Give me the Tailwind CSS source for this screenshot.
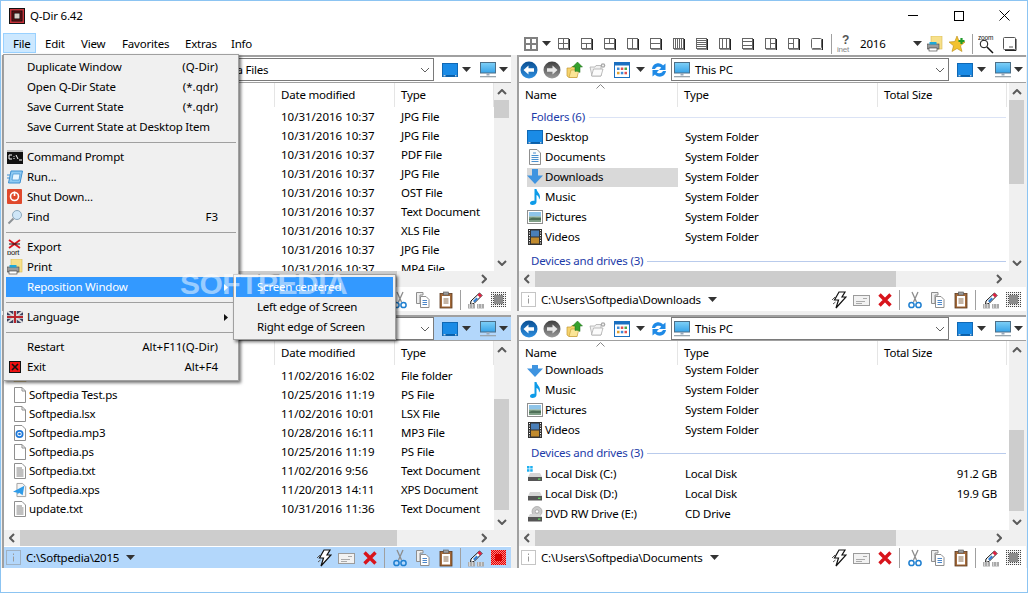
<!DOCTYPE html>
<html lang="en">
<head>
<meta charset="utf-8"/>
<title>Q-Dir 6.42</title>
<script src="https://cdn.jsdelivr.net/npm/@tailwindcss/browser@4"></script>
</head>
<body class="bg-white">

<!-- shared icons -->
<svg width="0" height="0" class="absolute">
  <defs>
    <linearGradient id="gBlue" x1="0" y1="0" x2="0" y2="1"><stop offset="0" stop-color="#0a4f93"/><stop offset="1" stop-color="#2f8fe0"/></linearGradient>
    <linearGradient id="gGrey" x1="0" y1="0" x2="0" y2="1"><stop offset="0" stop-color="#3e3e3e"/><stop offset="1" stop-color="#9a9a9a"/></linearGradient>
    <linearGradient id="gSky" x1="0" y1="0" x2="0" y2="1"><stop offset="0" stop-color="#7fd0f7"/><stop offset="1" stop-color="#37a3e8"/></linearGradient>
    <pattern id="pDots" width="2" height="2" patternUnits="userSpaceOnUse"><rect width="2" height="2" fill="#f2f2f2"/><rect width="1" height="1" fill="#444"/></pattern>
    <pattern id="pRed" width="2" height="2" patternUnits="userSpaceOnUse"><rect width="2" height="2" fill="#ff8080"/><rect width="1" height="1" fill="#e00000"/><rect x="1" y="1" width="1" height="1" fill="#e00000"/></pattern>
  </defs>

  <symbol id="back" viewBox="0 0 18 18"><circle cx="9" cy="9" r="8.5" fill="url(#gBlue)"/><path d="M3.5 9 8.5 4.5V7.2H14V10.8H8.5V13.5Z" fill="#fff"/></symbol>
  <symbol id="forward" viewBox="0 0 18 18"><circle cx="9" cy="9" r="8.5" fill="url(#gGrey)"/><path d="M14.5 9 9.5 4.5V7.2H4V10.8H9.5V13.5Z" fill="#e8e8e8"/></symbol>
  <symbol id="up" viewBox="0 0 18 18"><path d="M1 7H5L6 5.500H11V16.500H3L1 15Z" fill="#f6d36c" stroke="#c39a35" stroke-width=".7"/><path d="M3 16.500 5 9H13L11 16.500Z" fill="#fbe596" stroke="#c39a35" stroke-width=".6"/><path d="M11.500 1 16.500 6H14V11.500C12.500 10.500 10.500 10 9 10.500V6H6.500Z" fill="#35a02c" stroke="#1d6e18" stroke-width=".5"/></symbol>
  <symbol id="foldgear" viewBox="0 0 18 18"><path d="M1 6H6L7 4.500H12V15H3Z" fill="#f1f1f1" stroke="#adadad" stroke-width=".8"/><path d="M2.500 15 4.500 8H14L12 15Z" fill="#fbfbfb" stroke="#adadad" stroke-width=".8"/><circle cx="14" cy="4.500" r="2.300" fill="#a8a8a8"/><circle cx="14" cy="4.500" r=".9" fill="#fff"/></symbol>
  <symbol id="view" viewBox="0 0 16 16"><rect x=".5" y=".5" width="15" height="15" fill="#fff" stroke="#1a6fc0"/><rect x="1" y="1" width="14" height="2.500" fill="#1a6fc0"/><rect x="3" y="5.500" width="2.500" height="2.500" fill="#3c8ad8"/><rect x="6.800" y="5.500" width="2.500" height="2.500" fill="#e05050"/><rect x="10.500" y="5.500" width="2.500" height="2.500" fill="#4aa84a"/><rect x="3" y="9.800" width="2.500" height="2.500" fill="#e0a030"/><rect x="6.800" y="9.800" width="2.500" height="2.500" fill="#3c8ad8"/><rect x="10.500" y="9.800" width="2.500" height="2.500" fill="#e05050"/></symbol>
  <symbol id="refresh" viewBox="0 0 18 18"><path d="M2 8C2.500 4 6 1.800 9.500 2.500 11 2.800 12.300 3.500 13 4.500L15.500 2.500V9H9L11.200 6.800C10 5.500 6.500 5 5 8Z" fill="#1f8ae6"/><path d="M16 10C15.500 14 12 16.200 8.500 15.500 7 15.200 5.700 14.500 5 13.500L2.500 15.500V9H9L6.800 11.200C8 12.500 11.500 13 13 10Z" fill="#1f8ae6"/></symbol>
  <symbol id="desktop" viewBox="0 0 16 14"><rect x=".5" y=".5" width="15" height="13" fill="#1a8be6" stroke="#1068b4"/><rect x="1" y="12" width="14" height="1.500" fill="#0a5fa8"/><rect x="1.500" y="12.300" width="2" height="1" fill="#fff"/><rect x="13" y="12.300" width="1.500" height="1" fill="#fff"/></symbol>
  <symbol id="monitor" viewBox="0 0 16 16"><rect x=".5" y=".5" width="15" height="10.500" fill="url(#gSky)" stroke="#4c6f88"/><rect x="6.500" y="11" width="3" height="2.500" fill="#9ab"/><rect x="0" y="14" width="16" height="1.300" fill="#9aa5ad"/></symbol>
  <symbol id="caret" viewBox="0 0 9 5"><path d="M0 0H9L4.500 5Z" fill="#333"/></symbol>

  <symbol id="bolt" viewBox="0 0 16 18"><path d="M8 1H14L11 6H15L5 17 7.500 9H3.500Z" fill="#fff" stroke="#111" stroke-width="1.200"/><path d="M1 9 4 6M2 13 4.500 11" stroke="#555" fill="none"/></symbol>
  <symbol id="mail" viewBox="0 0 18 14"><rect x=".5" y="2.500" width="16" height="10" fill="#f2f2f2" stroke="#9b9b9b"/><path d="M10 5.500H14M3 8.500H12M3 10.500H9" stroke="#aaa"/></symbol>
  <symbol id="redx" viewBox="0 0 16 16"><path d="M2.500 2.500 13.500 13.500M13.500 2.500 2.500 13.500" stroke="#d8141c" stroke-width="3.400"/></symbol>
  <symbol id="scissors" viewBox="0 0 14 18"><path d="M4 1 8.500 11M10 1 5.500 11" stroke="#8d8d8d" stroke-width="1.300"/><circle cx="3.500" cy="14" r="2.600" fill="none" stroke="#1f7fd0" stroke-width="1.500"/><circle cx="10.500" cy="14" r="2.600" fill="none" stroke="#1f7fd0" stroke-width="1.500"/></symbol>
  <symbol id="copy" viewBox="0 0 16 18"><path d="M1.500 1.500H8V4H5V12.500H1.500Z" fill="#eee" stroke="#8e8e8e"/><path d="M5.500 5.500H11L14 8.500V16.500H5.500Z" fill="#fff" stroke="#8e8e8e"/><path d="M7.500 9.500H12M7.500 11.500H12M7.500 13.500H12" stroke="#4b86c9"/></symbol>
  <symbol id="paste" viewBox="0 0 14 18"><rect x="1" y="2.500" width="12" height="14.500" fill="#a2693a" stroke="#5d3a1e" stroke-width=".8"/><rect x="3" y="5" width="8" height="10.500" fill="#fff"/><rect x="4.500" y="1" width="5" height="3" fill="#9c9c9c" stroke="#555" stroke-width=".6"/><path d="M4.500 8H9.500M4.500 10H9.500M4.500 12H9.500" stroke="#8a6a4a"/></symbol>
  <symbol id="pen" viewBox="0 0 18 18"><path d="M4 10 12.500 2 15 4.500 7 12.500 3.500 13.500Z" fill="#fff" stroke="#111"/><path d="M10.500 4 12.500 2 15 4.500 13 6.500Z" fill="#e02040"/><path d="M6 10 9.500 6.500 11 8 7.500 11.500Z" fill="#2f7fd6"/><rect x="1" y="13" width="7" height="4.500" fill="#aaa"/><rect x="10" y="13" width="7" height="4.500" fill="#aaa"/><path d="M2 14H3M5 14H6M2 16H3M5 16H6M11 14H12M14 14H15M11 16H12M14 16H15" stroke="#fff"/></symbol>
  <symbol id="dots" viewBox="0 0 15 15"><rect width="15" height="15" fill="url(#pDots)"/><rect x="3" y="3" width="9" height="9" fill="#8b8b8b"/></symbol>
  <symbol id="dotsred" viewBox="0 0 15 15"><rect width="15" height="15" fill="url(#pRed)"/><rect x="4" y="4" width="7" height="7" fill="#d80000"/></symbol>
  <symbol id="info" viewBox="0 0 15 15"><rect x=".5" y=".5" width="14" height="14" fill="none" stroke="#8a8a8a" stroke-dasharray="1 1"/><path d="M7.500 3.500V5M7.500 6.500V11.500" stroke="#9a9a9a"/></symbol>
  <symbol id="chevup" viewBox="0 0 10 6"><path d="M1 5 5 1 9 5" fill="none" stroke="#5a5a5a" stroke-width="2"/></symbol>
  <symbol id="chevdown" viewBox="0 0 10 6"><path d="M1 1 5 5 9 1" fill="none" stroke="#5a5a5a" stroke-width="2"/></symbol>
  <symbol id="chevleft" viewBox="0 0 6 10"><path d="M5 1 1 5 5 9" fill="none" stroke="#5a5a5a" stroke-width="2"/></symbol>
  <symbol id="chevright" viewBox="0 0 6 10"><path d="M1 1 5 5 1 9" fill="none" stroke="#5a5a5a" stroke-width="2"/></symbol>

  <symbol id="file" viewBox="0 0 14 16"><path d="M1.500 .5H9L12.500 4V15.500H1.500Z" fill="#fff" stroke="#8f8f8f"/><path d="M9 .5V4H12.500" fill="none" stroke="#8f8f8f"/></symbol>
  <symbol id="txt" viewBox="0 0 14 16"><path d="M1.500 .5H9L12.500 4V15.500H1.500Z" fill="#fff" stroke="#8f8f8f"/><path d="M3.500 5H9M3.500 7H10.500M3.500 9H10.500M3.500 11H10.500M3.500 13H10.500" stroke="#808080"/></symbol>
  <symbol id="mp3" viewBox="0 0 14 16"><path d="M1.500 .5H9L12.500 4V15.500H1.500Z" fill="#fff" stroke="#8f8f8f"/><circle cx="6.500" cy="9" r="4" fill="#1f78d8"/><circle cx="6.500" cy="9" r="2.300" fill="#fff"/><circle cx="6.500" cy="9" r="1.300" fill="#1f78d8"/></symbol>
  <symbol id="xps" viewBox="0 0 16 16"><path d="M4.500 .5H11L14.500 4V15.500H4.500Z" fill="#f5f5f5" stroke="#9a9a9a"/><path d="M0 10 13 3 11 14 7 11 5 13 5 11Z" fill="#2f9be8"/></symbol>
  <symbol id="folder" viewBox="0 0 16 14"><path d="M1 1H6L7.500 3H15V13H1Z" fill="#e9c46f" stroke="#b8954a" stroke-width=".7"/></symbol>
  <symbol id="documents" viewBox="0 0 16 16"><path d="M2.500 .5H10L13.500 4V15.500H2.500Z" fill="#fbfbfb" stroke="#8f8f8f"/><path d="M6 4H9M4.500 6.500H11.500M4.500 8.500H11.500M4.500 10.500H11.500M4.500 12.500H11.500" stroke="#4a90d0"/></symbol>
  <symbol id="download" viewBox="0 0 16 16"><path d="M5 0H11V6.500H16L8 15 0 6.500H5Z" fill="#3f94e0"/></symbol>
  <symbol id="music" viewBox="0 0 16 16"><path d="M7.500 0H9.500C9.800 3 13 4 13 8 13 9 12.500 10 12 10.500 12.300 8 10.800 6.500 9.500 6V13C9.500 15 7.500 16 5.500 16 3.800 16 3 15 3 14 3 12.500 5 11.200 7.500 11.800Z" fill="#0d9be8"/></symbol>
  <symbol id="pictures" viewBox="0 0 16 14"><rect x=".5" y=".5" width="15" height="13" fill="#fff" stroke="#8f8f8f"/><rect x="2" y="2" width="12" height="4.500" fill="#8ec4e8"/><rect x="2" y="6.500" width="12" height="5.500" fill="#7f9f86"/><path d="M2 9C6 6.500 9 8.500 14 8V10H2Z" fill="#4f6f58"/></symbol>
  <symbol id="videos" viewBox="0 0 14 16"><rect width="14" height="16" fill="#333"/><rect x="3" y="1.500" width="8" height="6" fill="#4a7fb8"/><rect x="3" y="8.500" width="8" height="6" fill="#c08a2e"/><path d="M1 1.500H2M1 4H2M1 6.500H2M1 9H2M1 11.500H2M1 14H2M12 1.500H13M12 4H13M12 6.500H13M12 9H13M12 11.500H13M12 14H13" stroke="#fff"/></symbol>
  <symbol id="diskc" viewBox="0 0 16 16"><rect x="0" y="0" width="2.500" height="2.500" fill="#1fb0f0"/><rect x="3.200" y="0" width="2.500" height="2.500" fill="#1fb0f0"/><rect x="0" y="3.200" width="2.500" height="2.500" fill="#1fb0f0"/><rect x="3.200" y="3.200" width="2.500" height="2.500" fill="#1fb0f0"/><path d="M3 7H13L15 11H1Z" fill="#d5d5d5"/><rect x="1" y="11" width="14" height="4" fill="#555"/><rect x="11" y="12.500" width="2.500" height="1.200" fill="#5fe05f"/></symbol>
  <symbol id="disk" viewBox="0 0 16 16"><path d="M3 6H13L15 10H1Z" fill="#d5d5d5"/><rect x="1" y="10" width="14" height="4.500" fill="#555"/><rect x="11" y="11.700" width="2.500" height="1.200" fill="#5fe05f"/></symbol>
  <symbol id="dvd" viewBox="0 0 16 16"><circle cx="10" cy="5.500" r="5" fill="#c9c9c9" stroke="#999" stroke-width=".6"/><circle cx="10" cy="5.500" r="1.700" fill="#fff" stroke="#888" stroke-width=".6"/><path d="M3 8H13L15 11H1Z" fill="#d5d5d5"/><rect x="1" y="11" width="14" height="4.500" fill="#555"/><rect x="11" y="12.500" width="2.500" height="1.200" fill="#5fe05f"/></symbol>

  <symbol id="cmd" viewBox="0 0 16 14"><rect width="16" height="14" fill="#111"/><rect x="0" y="0" width="16" height="2" fill="#bbb"/><path d="M2 5H5M2 5V9H5M7 6V6.800M7 8V9M9 5 11 9M12 10H15" stroke="#fff" fill="none"/></symbol>
  <symbol id="run" viewBox="0 0 16 14"><path d="M4 1H15.500L13 13H1.500Z" fill="#8fcaf2" stroke="#3d8fd0"/><path d="M6 4H13L12 10H5Z" fill="#e8f6ff" stroke="#3d8fd0" stroke-width=".7"/><path d="M0 5H3M0 8H2.500" stroke="#3d8fd0"/></symbol>
  <symbol id="shutdown" viewBox="0 0 16 16"><rect width="15" height="15" rx="1" fill="#e0492c"/><circle cx="7.500" cy="7.500" r="4" fill="none" stroke="#fff" stroke-width="1.600"/><path d="M7.500 2.500V7" stroke="#fff" stroke-width="1.600"/></symbol>
  <symbol id="find" viewBox="0 0 16 16"><circle cx="10" cy="6" r="4.500" fill="#cfe6f7" stroke="#8ba7bb"/><path d="M6.500 9.500 1.500 14.500" stroke="#8d9296" stroke-width="2"/></symbol>
  <symbol id="export" viewBox="0 0 16 16"><path d="M2 1 13 9M13 1 2 9" stroke="#d8141c" stroke-width="1.800"/><path d="M2 5H13" stroke="#111"/><text x="0" y="15.500" font-size="7.500" font-family="Liberation Sans" fill="#111">port</text></symbol>
  <symbol id="print" viewBox="0 0 16 16"><rect x="4" y="0" width="11" height="13" fill="#f7e08a" stroke="#d8b850" stroke-width=".6"/><rect x="0" y="8" width="12" height="5" fill="#9c9c9c" stroke="#444" stroke-width=".6"/><rect x="2.500" y="6" width="7" height="2.500" fill="#1fa8d8"/><rect x="2" y="12" width="8" height="3" fill="#fff" stroke="#333" stroke-width=".6"/></symbol>
  <symbol id="flag" viewBox="0 0 16 12"><rect width="16" height="12" fill="#3a3f5c"/><path d="M0 0 16 12M16 0 0 12" stroke="#ddd" stroke-width="2"/><path d="M8 0V12M0 6H16" stroke="#ddd" stroke-width="3.600"/><path d="M8 0V12M0 6H16" stroke="#b8242c" stroke-width="2"/></symbol>
  <symbol id="exit" viewBox="0 0 12 12"><rect x=".5" y=".5" width="11" height="11" fill="#ee1111" stroke="#111"/><path d="M3 3 9 9M9 3 3 9" stroke="#111" stroke-width="1.600"/></symbol>

  <symbol id="appicon" viewBox="0 0 16 16"><rect width="16" height="16" fill="#111"/><rect x="1" y="1" width="14" height="14" fill="#c8323a"/><rect x="3" y="3" width="10" height="10" fill="#7a0f12" stroke="#111"/><rect x="5" y="5" width="6" height="6" fill="#d8d0c8" stroke="#111"/></symbol>
  <symbol id="inet" viewBox="0 0 18 18"><text x="5" y="9" font-size="12" font-weight="700" font-family="Liberation Sans" fill="#555">?</text><text x="0" y="17" font-size="8" font-family="Liberation Sans" fill="#888">inet</text></symbol>
  <symbol id="star" viewBox="0 0 18 18"><path d="M8 1 10.200 6.500 16 7 11.500 10.800 13 16.500 8 13.500 3 16.500 4.500 10.800 0 7 5.800 6.500Z" fill="#f2c230" stroke="#b98a10" stroke-width=".6"/><path d="M12.500 3V9M9.500 6H15.500" stroke="#1f9a2a" stroke-width="2.200"/></symbol>
  <symbol id="zoom" viewBox="0 0 18 20"><text x="0" y="5.500" font-size="6.500" font-family="Liberation Sans" fill="#111">zoom</text><circle cx="6" cy="10" r="3.800" fill="#fff" stroke="#111"/><path d="M9 13 15 19" stroke="#111" stroke-width="1.500"/></symbol>
  <symbol id="win" viewBox="0 0 14 14"><rect x=".5" y=".5" width="12" height="12" rx="1" fill="#fff" stroke="#555"/><path d="M13 2V13.500H2" stroke="#222" fill="none"/><path d="M6 10H10" stroke="#555"/></symbol>

  <symbol id="lay0" viewBox="0 0 14 14"><rect x="1" y="1" width="12" height="12" fill="#fff" stroke="#808080" stroke-width="2"/><path d="M7 0V14M0 7H14" stroke="#808080" stroke-width="2"/></symbol>
  <symbol id="lay1" viewBox="0 0 12 12"><rect x=".5" y=".5" width="10" height="10" fill="#fff" stroke="#666"/><path d="M5.500 0V11M0 5.500H11" stroke="#666"/><path d="M11.500 1V12H1" stroke="#222" fill="none"/></symbol>
  <symbol id="lay2" viewBox="0 0 12 12"><rect x=".5" y=".5" width="10" height="10" fill="#fff" stroke="#666"/><path d="M0 5.500H11M5.500 5.500V11" stroke="#666"/><path d="M11.500 1V12H1" stroke="#222" fill="none"/></symbol>
  <symbol id="lay3" viewBox="0 0 12 12"><rect x=".5" y=".5" width="10" height="10" fill="#fff" stroke="#666"/><path d="M0 5.500H11M5.500 0V5.500" stroke="#666"/><path d="M11.500 1V12H1" stroke="#222" fill="none"/></symbol>
  <symbol id="lay4" viewBox="0 0 12 12"><rect x=".5" y=".5" width="10" height="10" fill="#fff" stroke="#666"/><path d="M5.500 0V11" stroke="#666"/><path d="M11.500 1V12H1" stroke="#222" fill="none"/></symbol>
  <symbol id="lay5" viewBox="0 0 12 12"><rect x=".5" y=".5" width="10" height="10" fill="#fff" stroke="#666"/><path d="M0 5.500H11" stroke="#666"/><path d="M11.500 1V12H1" stroke="#222" fill="none"/></symbol>
  <symbol id="lay6" viewBox="0 0 12 12"><rect x=".5" y=".5" width="10" height="10" fill="#fff" stroke="#666"/><path d="M2.500 0V11M4.500 0V11M6.500 0V11M8.500 0V11" stroke="#666"/><path d="M11.500 1V12H1" stroke="#222" fill="none"/></symbol>
  <symbol id="lay7" viewBox="0 0 12 12"><rect x=".5" y=".5" width="10" height="10" fill="#fff" stroke="#666"/><path d="M0 2.500H11M0 4.500H11M0 6.500H11M0 8.500H11" stroke="#666"/><path d="M11.500 1V12H1" stroke="#222" fill="none"/></symbol>
  <symbol id="lay8" viewBox="0 0 12 12"><rect x=".5" y=".5" width="10" height="10" fill="#fff" stroke="#666"/><path d="M3.500 0V11M7.500 0V11" stroke="#666"/><path d="M11.500 1V12H1" stroke="#222" fill="none"/></symbol>
  <symbol id="lay9" viewBox="0 0 12 12"><rect x=".5" y=".5" width="10" height="10" fill="#fff" stroke="#666"/><path d="M0 3.500H11M0 7.500H11" stroke="#666"/><path d="M11.500 1V12H1" stroke="#222" fill="none"/></symbol>
  <symbol id="lay10" viewBox="0 0 12 12"><rect x=".5" y=".5" width="10" height="10" fill="#fff" stroke="#666"/><path d="M5.500 0V11M5.500 5.500H11" stroke="#666"/><path d="M11.500 1V12H1" stroke="#222" fill="none"/></symbol>
  <symbol id="lay11" viewBox="0 0 12 12"><rect x=".5" y=".5" width="10" height="10" fill="#fff" stroke="#666"/><path d="M5.500 0V11M0 5.500H5.500" stroke="#666"/><path d="M11.500 1V12H1" stroke="#222" fill="none"/></symbol>
  <symbol id="lay12" viewBox="0 0 12 12"><rect x=".5" y=".5" width="10" height="10" rx="1" fill="#fff" stroke="#666"/><path d="M11.500 1V12H1" stroke="#222" fill="none"/></symbol>
</svg>

<div id="app" class="relative w-[1028px] h-[593px] overflow-hidden border border-[#8cc4f2] bg-white flex flex-col text-[11.5px] leading-none tracking-[-0.2px] text-black font-['Noto_Sans',sans-serif]">

  <!-- title bar -->
  <div class="h-[31px] flex items-center shrink-0">
    <svg width="16" height="16" class="ml-[8px] mt-[-2px]"><use href="#appicon"/></svg>
    <span class="ml-[5px] mt-[-2px]">Q-Dir 6.42</span>
    <div class="ml-auto flex items-center mt-[-2px] mr-[0px]">
      <div class="w-[46px] h-[20px] flex items-center justify-center"><div class="w-[10px] h-px bg-black"></div></div>
      <div class="w-[46px] h-[20px] flex items-center justify-center"><div class="w-[10px] h-[10px] border border-black"></div></div>
      <div class="w-[45px] h-[20px] flex items-center justify-center">
        <svg width="11" height="11"><path d="M.5.5 10.500 10.500M10.500.5.5 10.500" stroke="#000"/></svg>
      </div>
    </div>
  </div>

  <!-- menu + main toolbar -->
  <div class="h-[23px] flex items-center shrink-0">
    <div class="w-[519px] flex items-center pl-[2px] h-[20px] self-start mt-[1px] pt-px">
      <div class="w-[33px] h-[20px] mt-[-1px] flex items-center pt-px pl-[9px] bg-[#cce8ff] border border-[#99d1ff]">File</div>
      <div class="w-[36px] pl-[9px]">Edit</div>
      <div class="w-[41px] pl-[9px]">View</div>
      <div class="w-[63px] pl-[9px]">Favorites</div>
      <div class="w-[46px] pl-[9px]">Extras</div>
      <div class="w-[40px] pl-[9px]">Info</div>
    </div>
    <div id="mainbar" class="flex items-center h-[23px]"></div>
  </div>

  <!-- four panes -->
  <div id="panes" class="grid grid-cols-[516px_510px] grid-rows-[260px_253px] bg-[#f0f0f0] shrink-0"></div>

  <div class="flex-1 bg-white"></div>

  <!-- File menu -->
  <div class="absolute left-[2px] top-[53px] w-[236px] h-[327px] bg-[#f0f0f0] border border-[#a0a0a0] p-[2px] shadow-[2px_2px_3px_rgba(0,0,0,0.55)]" id="filemenu"></div>

  <!-- Reposition Window submenu -->
  <div class="absolute left-[232px] top-[273px] w-[163px] h-[66px] bg-[#f0f0f0] border border-[#a0a0a0] p-[2px] shadow-[2px_2px_3px_rgba(0,0,0,0.55)]">
    <div class="h-[20px] flex items-center pl-[21px] bg-[#3399ff] text-white">Screen centered</div>
    <div class="h-[20px] flex items-center pl-[21px]">Left edge of Screen</div>
    <div class="h-[20px] flex items-center pl-[21px]">Right edge of Screen</div>
  </div>

  <!-- watermark -->
  <div class="absolute left-[179px] top-[267px] text-[30px] leading-[32px] font-bold tracking-[-0.5px] text-white/50 pointer-events-none font-['Liberation_Sans',sans-serif]">SOFTPEDIA</div>
</div>

<script>
  function icon(id, w, h, cls) {
    return `<svg width="${w}" height="${h}" class="shrink-0 ${cls || ''}"><use href="#${id}"/></svg>`;
  }

  // main toolbar
  function slot(w, inner) {
    return `<div class="h-[23px] flex items-center justify-center shrink-0" style="width:${w}px">${inner}</div>`;
  }
  let bar = slot(21, icon('lay0', 14, 14)) + slot(11, icon('caret', 9, 5));
  for (let i = 1; i <= 12; i++) bar += slot(23, icon('lay' + i, 12, 12));
  bar += slot(6, '<div class="w-px h-[20px] bg-[#a0a0a0]"></div>');
  bar += slot(24, icon('inet', 18, 18));
  bar += '<div class="w-[53px] pl-[2px] shrink-0">2016</div>';
  bar += slot(12, icon('caret', 9, 5));
  bar += slot(23, icon('print', 16, 16)) + slot(23, icon('star', 18, 18));
  bar += slot(7, '<div class="w-px h-[20px] bg-[#a0a0a0]"></div>');
  bar += slot(22, icon('zoom', 18, 20)) + slot(23, icon('win', 14, 14));
  document.getElementById('mainbar').innerHTML = bar;

  // file menu
  const sep = '<div class="h-[10px] pt-[5px]"><div class="h-px bg-[#a0a0a0]"></div></div>';
  const item = (text, ic, right, arrow, hot) => `
    <div class="relative h-[20px] flex items-center pl-[21px] pr-[18px] ${hot ? 'bg-[#3399ff] text-white' : ''}">
      ${ic ? `<div class="absolute left-[1px] top-[2px] w-[16px] h-[16px] flex items-center justify-center">${ic}</div>` : ''}
      <span>${text}</span><span class="ml-auto tracking-normal">${right || ''}</span>
      ${arrow ? `<svg width="4" height="7" class="absolute right-[8px] top-[7px]"><path d="M0 0 4 3.500 0 7Z" fill="${hot ? '#fff' : '#111'}"/></svg>` : ''}
    </div>`;
  document.getElementById('filemenu').innerHTML =
    item('Duplicate Window', '', '(Q-Dir)') +
    item('Open Q-Dir State', '', '(*.qdr)') +
    item('Save Current State', '', '(*.qdr)') +
    item('Save Current State at Desktop Item') + sep +
    item('Command Prompt', icon('cmd', 16, 14)) +
    item('Run...', icon('run', 16, 14)) +
    item('Shut Down...', icon('shutdown', 16, 16)) +
    item('Find', icon('find', 16, 16), 'F3') + sep +
    item('Export', icon('export', 16, 16)) +
    item('Print', icon('print', 16, 16)) +
    item('Reposition Window', '', '', true, true) + sep +
    item('Language', icon('flag', 16, 12), '', true) + sep +
    item('Restart', '', 'Alt+F11(Q-Dir)') +
    item('Exit', icon('exit', 12, 12), 'Alt+F4');

  // panes
  function toolbar(p) {
    return `
    <div class="flex items-center shrink-0 ${p.top ? 'h-[25px]' : 'h-[23px]'} ${p.active ? 'bg-[#b3d7fb]' : 'bg-white'}">
      <div class="w-[20px] flex justify-center">${icon('back', 18, 18)}</div>
      <div class="w-[26px] flex justify-center">${icon('forward', 18, 18)}</div>
      <div class="w-[20px] flex justify-center">${icon('up', 18, 18)}</div>
      <div class="w-[26px] flex justify-center">${icon('foldgear', 18, 18)}</div>
      <div class="w-[22px] flex justify-center">${icon('view', 16, 16)}</div>
      <div class="w-[14px] flex justify-center">${icon('caret', 9, 5)}</div>
      <div class="w-[24px] flex justify-center">${icon('refresh', 18, 18)}</div>
      <div class="w-[278px] h-[23px] border border-[#7a7a7a] bg-white flex items-center shrink-0">
        ${icon(p.comboIcon, 16, 16, 'ml-[2px]')}
        <span class="${p.comboCls}">${p.combo}</span>
        <svg width="10" height="6" class="ml-auto mr-[3px]"><path d="M1 1 5 5 9 1" fill="none" stroke="#606060"/></svg>
      </div>
      ${icon('desktop', 16, 14, 'ml-[8px]')}
      <div class="ml-[2px] w-[12px] flex justify-center">${icon('caret', 9, 5)}</div>
      ${icon('monitor', 16, 16, 'ml-[8px]')}
      <div class="ml-[1px] w-[12px] flex justify-center">${icon('caret', 9, 5)}</div>
    </div>`;
  }

  function header(p) {
    const cols = p.cols.map(c => `<div class="h-[24px] flex items-center pl-[6px] border-r border-[#e5e5e5] shrink-0" style="width:${c[1]}px">${c[0]}</div>`).join('');
    return `<div class="relative h-[24px] flex shrink-0 bg-white">${cols}
      <svg width="9" height="5" class="absolute top-[1px]" style="left:${p.cols[0][1] - 82}px"><path d="M.5 4.500 4.500.5 8.500 4.500" fill="none" stroke="#888"/></svg>
    </div>`;
  }

  function scrollV(p) {
    return `
    <div class="w-[17px] shrink-0 bg-[#f0f0f0] pr-[2px] flex flex-col items-stretch">
      <div class="h-[17px] flex items-center justify-center shrink-0">${icon('chevup', 10, 6)}</div>
      <div class="${p.thumb} bg-[#cdcdcd] shrink-0"></div>
      <div class="flex-1"></div>
      <div class="h-[17px] flex items-center justify-center shrink-0">${icon('chevdown', 10, 6)}</div>
    </div>`;
  }

  function scrollH(p) {
    return `
    <div class="h-[16px] flex items-center shrink-0 bg-[#f0f0f0]">
      <div class="w-[16px] flex justify-center">${icon('chevleft', 6, 10)}</div>
      <div class="${p.hthumb} h-[16px] bg-[#cdcdcd]"></div>
      <div class="ml-auto mr-[19px] w-[16px] flex justify-center">${icon('chevright', 6, 10)}</div>
    </div>`;
  }

  function status(p) {
    const tools = [
      ['bolt', 16, 18], ['mail', 18, 14], ['redx', 16, 16], null,
      ['scissors', 14, 18], ['copy', 16, 18], ['paste', 14, 18], null,
      ['pen', 18, 18], [p.active ? 'dotsred' : 'dots', 15, 15]
    ].map(t => t
      ? `<div class="w-[23px] flex justify-center">${icon(t[0], t[1], t[2])}</div>`
      : '<div class="w-[7px] flex justify-center"><div class="w-px h-[20px] bg-[#a0a0a0]"></div></div>').join('');
    return `
    <div class="mt-px ${p.top ? 'h-[23px]' : 'h-[21px]'} shrink-0 flex items-center ${p.active ? 'bg-[#b3d7fb]' : 'bg-white'}">
      ${icon('info', 15, 15, 'ml-[2px]')}
      <span class="ml-[5px] whitespace-nowrap">${p.path}</span>
      ${icon('caret', 9, 5, 'ml-[7px]')}
      <div class="ml-auto mr-px flex items-center">${tools}</div>
    </div>`;
  }

  function pane(p) {
    return `
    <div class="w-[509px] ${p.left ? 'ml-px' : ''} ${p.top ? 'h-[256px]' : 'h-[253px]'} flex flex-col border-l-2 border-t-2 border-[#a0a0a0] bg-white">
      ${toolbar(p)}
      <div class="h-px bg-[#a0a0a0] shrink-0"></div>
      <div class="flex-1 min-h-0 flex">
        <div class="flex-1 min-w-0 flex flex-col">
          ${header(p)}
          <div class="flex-1 min-h-0 overflow-hidden relative">${p.body}</div>
        </div>
        ${scrollV(p)}
      </div>
      ${scrollH(p)}
      ${status(p)}
    </div>`;
  }

  const fileRow = (ic, name, date, type) => `
    <div class="h-[19px] flex items-center">
      <div class="w-[271px] flex items-center pl-[9px] shrink-0">${ic ? icon(ic, 14, 16, 'mr-[2px]') : ''}<span>${name}</span></div>
      <div class="w-[120px] pl-[6px] shrink-0 tracking-normal">${date}</div>
      <div class="pl-[6px] whitespace-nowrap">${type}</div>
    </div>`;
  const sysRow = (ic, name, type, size, hot) => `
    <div class="h-[20px] flex items-center">
      <div class="w-[159px] pl-[8px] shrink-0">
        <div class="h-[19px] flex items-center ${hot ? 'bg-[#d9d9d9]' : ''}">
          <div class="w-[16px] flex justify-center shrink-0">${icon(ic, 16, 16)}</div>
          <span class="ml-[2px]">${name}</span>
        </div>
      </div>
      <div class="w-[200px] pl-[7px] shrink-0">${type}</div>
      <div class="w-[119px] text-right shrink-0">${size || ''}</div>
    </div>`;
  const groupRow = (text, lineCls, cls) => `
    <div class="h-[20px] flex items-center pl-[12px] pr-[3px] ${cls}">
      <span class="text-[#1c3ba8] whitespace-nowrap">${text}</span>
      <div class="flex-1 h-px ml-[4px] ${lineCls}"></div>
    </div>`;

  const jpg = t => fileRow('', '', '10/31/2016 10:37', t);
  const topLeft = '<div class="pt-0">' +
    ['JPG File','JPG File','PDF File','JPG File','OST File','Text Document','XLS File','JPG File','MP4 File'].map(jpg).join('') + '</div>';
  const botLeft = '<div class="pt-px">' +
    fileRow('folder', '', '11/02/2016 16:02', 'File folder') +
    fileRow('file', 'Softpedia Test.ps', '10/25/2016 11:19', 'PS File') +
    fileRow('file', 'Softpedia.lsx', '11/02/2016 10:01', 'LSX File') +
    fileRow('mp3', 'Softpedia.mp3', '10/28/2016 16:11', 'MP3 File') +
    fileRow('file', 'Softpedia.ps', '10/25/2016 11:19', 'PS File') +
    fileRow('txt', 'Softpedia.txt', '11/02/2016 9:56', 'Text Document') +
    fileRow('xps', 'Softpedia.xps', '11/20/2013 14:11', 'XPS Document') +
    fileRow('txt', 'update.txt', '10/31/2016 11:36', 'Text Document') + '</div>';
  const topRight =
    groupRow('Folders (6)', 'bg-[#dbe3f5]') +
    sysRow('desktop', 'Desktop', 'System Folder') +
    sysRow('documents', 'Documents', 'System Folder') +
    sysRow('download', 'Downloads', 'System Folder', '', true) +
    sysRow('music', 'Music', 'System Folder') +
    sysRow('pictures', 'Pictures', 'System Folder') +
    sysRow('videos', 'Videos', 'System Folder') +
    groupRow('Devices and drives (3)', 'bg-[#b9cbec]', 'mt-[4px]');
  const botRight = '<div class="mt-[-5px]">' +
    sysRow('download', 'Downloads', 'System Folder') +
    sysRow('music', 'Music', 'System Folder') +
    sysRow('pictures', 'Pictures', 'System Folder') +
    sysRow('videos', 'Videos', 'System Folder') +
    groupRow('Devices and drives (3)', 'bg-[#b9cbec]', 'mt-[3px]') +
    '<div class="h-px"></div>' +
    sysRow('diskc', 'Local Disk (C:)', 'Local Disk', '91.2 GB') +
    sysRow('disk', 'Local Disk (D:)', 'Local Disk', '19.9 GB') +
    sysRow('dvd', 'DVD RW Drive (E:)', 'CD Drive') + '</div>';

  const fileCols = [['Name', 271], ['Date modified', 120], ['Type', 99]];
  const sysCols = [['Name', 159], ['Type', 200], ['Total Size', 129]];

  document.getElementById('panes').innerHTML =
    pane({ left: true, top: true, combo: 'Softpedia Files', comboCls: 'ml-[18px]', comboIcon: 'folder', cols: fileCols, thumb: 'h-[18px]', hthumb: 'w-[377px]', path: 'C:\\Softpedia', body: topLeft }) +
    pane({ top: true, combo: 'This PC', comboCls: 'ml-[5px]', comboIcon: 'monitor', cols: sysCols, thumb: 'h-[84px]', hthumb: 'w-[361px]', path: 'C:\\Users\\Softpedia\\Downloads', body: topRight }) +
    pane({ left: true, active: true, combo: 'Softpedia', comboCls: 'ml-[5px]', comboIcon: 'folder', cols: fileCols, thumb: 'mt-[41px] h-[111px]', hthumb: 'w-[377px]', path: 'C:\\Softpedia\\2015', body: botLeft }) +
    pane({ combo: 'This PC', comboCls: 'ml-[5px]', comboIcon: 'monitor', cols: sysCols, thumb: 'mt-[72px] h-[81px]', hthumb: 'w-[361px]', path: 'C:\\Users\\Softpedia\\Documents', body: botRight });
</script>
</body>
</html>
